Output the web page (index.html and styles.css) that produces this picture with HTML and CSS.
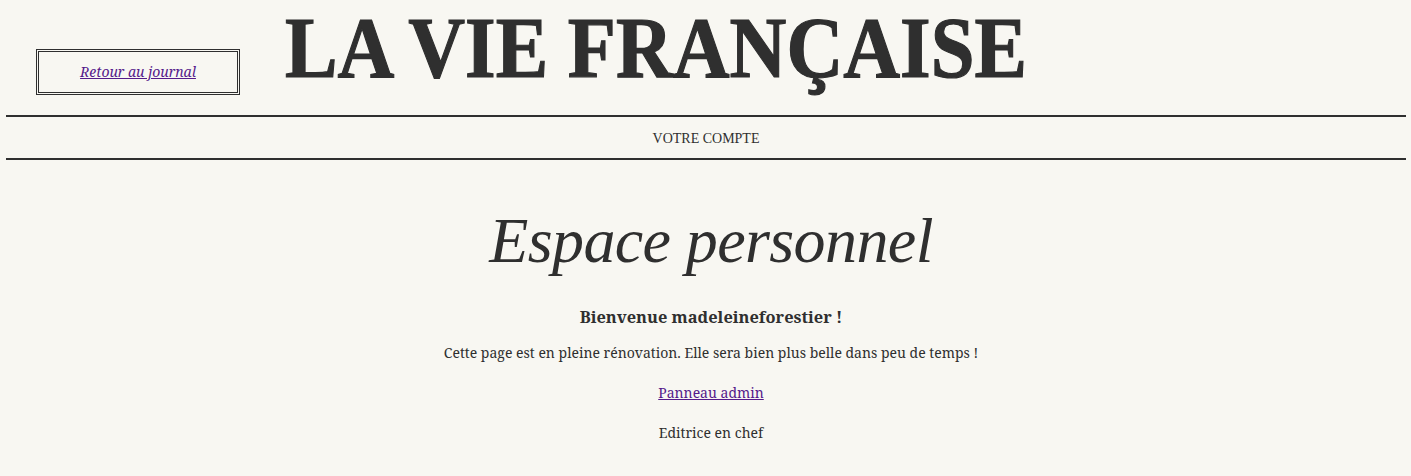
FILE: index.html
```html
<!DOCTYPE html>
<html lang="fr">
<head>
<meta charset="utf-8">
<title>Votre compte</title>
<link rel="stylesheet" href="styles.css">
</head>
<body>
<header class="masthead">
  <div class="back-box"><a href="#" class="back-link">Retour au journal</a></div>
  <h1 class="title">LA VIE FRANÇAISE</h1>
</header>
<nav class="section-bar">VOTRE COMPTE</nav>
<main class="content">
  <h2 class="page-title">Espace personnel</h2>
  <p class="welcome">Bienvenue madeleineforestier !</p>
  <p>Cette page est en pleine rénovation. Elle sera bien plus belle dans peu de temps !</p>
  <p><a href="#" class="admin-link">Panneau admin</a></p>
  <p>Editrice en chef</p>
</main>
</body>
</html>
```
FILE: styles.css
```css
html { background: #f8f7f2; }
body {
  margin: 0 5px 0 6px;
  font-family: "Noto Serif", "DejaVu Serif", serif;
  color: #2f2f2f;
  font-size: 14px;
}
.masthead {
  display: flex;
  align-items: flex-start;
  height: 115px;
}
.back-box {
  margin: 49px 0 0 30px;
  width: 198px;
  height: 39px;
  padding-bottom: 1px;
  border: 3px double #2f2f2f;
  display: flex;
  align-items: center;
  justify-content: center;
}
.back-link { color: #551a8b; font-style: italic; font-size: 14px; }
.title {
  margin: 0 0 0 45px;
  font-family: "Liberation Serif", serif;
  font-weight: 700;
  font-size: 86px;
  line-height: 96px;
  letter-spacing: 0;
  -webkit-text-stroke: 1.2px #2f2f2f;
  transform: scaleX(0.915);
  transform-origin: left center;
  white-space: nowrap;
}
.section-bar {
  border-top: 2px solid #2f2f2f;
  border-bottom: 2px solid #2f2f2f;
  height: 39px;
  padding-top: 2px;
  display: flex;
  align-items: center;
  justify-content: center;
  font-family: "Liberation Serif", serif;
  font-size: 14px;
}
.content { text-align: center; padding-left: 10px; }
.page-title {
  margin: 43px 0 0;
  font-family: "Liberation Serif", serif;
  font-style: italic;
  font-weight: 400;
  font-size: 64px;
  line-height: 76px;
  letter-spacing: -0.6px;
}
.content p { margin: 0 0 22px; line-height: 18px; }
.welcome { font-weight: 700; font-size: 16.4px; margin-top: 29px !important; margin-bottom: 18px !important; }
.admin-link { color: #551a8b; }
```
